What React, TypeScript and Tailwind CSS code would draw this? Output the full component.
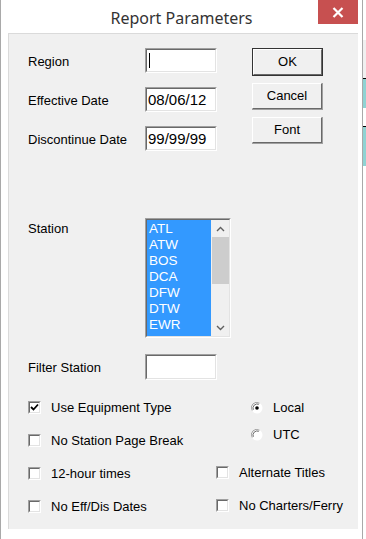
import React from "react";

const font = { fontFamily: '"Liberation Sans", Arial, sans-serif' };

function Sunken({ className = "", children }: { className?: string; children?: React.ReactNode }) {
  return (
    <div className={"border border-t-[#a0a0a0] border-l-[#a0a0a0] border-b-white border-r-white " + className}>
      <div className="w-full h-full border border-t-[#696969] border-l-[#696969] border-b-[#e3e3e3] border-r-[#e3e3e3] bg-white">
        {children}
      </div>
    </div>
  );
}

function TextBox({ value }: { value?: string }) {
  return (
    <Sunken className="w-[72px] h-[25px]">
      <div className="h-full flex items-center pl-[1px] text-[15px] leading-none text-black">
        {value === undefined ? <span className="w-px h-[15px] bg-black ml-[1px]" /> : value}
      </div>
    </Sunken>
  );
}

function Btn({ label, isDefault }: { label: string; isDefault?: boolean }) {
  const inner = (
    <div className="w-full h-full border border-t-white border-l-white border-b-[#696969] border-r-[#696969] bg-[#f0f0f0] flex items-center justify-center text-[13px] text-black">
      {label}
    </div>
  );
  if (isDefault) {
    return <div className="w-[71px] h-[28px] border border-[#333]">{inner}</div>;
  }
  return <div className="w-[71px] h-[27px] border-r border-b border-r-[#a0a0a0] border-b-[#a0a0a0]">{inner}</div>;
}

function CheckBox({ checked }: { checked?: boolean }) {
  return (
    <div className="w-[13px] h-[13px] border border-t-[#a0a0a0] border-l-[#a0a0a0] border-b-white border-r-white shrink-0">
      <div className="w-full h-full border border-t-[#696969] border-l-[#696969] border-b-[#e3e3e3] border-r-[#e3e3e3] bg-white flex items-center justify-center">
        {checked && (
          <svg width="9" height="9" viewBox="0 0 9 9">
            <path d="M1 4 L3.5 6.5 L8 1.5" fill="none" stroke="#000" strokeWidth="1.8" />
          </svg>
        )}
      </div>
    </div>
  );
}

function Radio({ checked }: { checked?: boolean }) {
  return (
    <svg width="12" height="12" viewBox="0 0 12 12" className="shrink-0">
      <circle cx="6" cy="6" r="5.5" fill="#fff" />
      <path d="M1.2 8.5 A5.3 5.3 0 0 1 8.5 1.2" fill="none" stroke="#a0a0a0" strokeWidth="1" />
      <path d="M2.3 7.8 A4.2 4.2 0 0 1 7.8 2.3" fill="none" stroke="#696969" strokeWidth="1" />
      {checked && <circle cx="6" cy="6" r="1.8" fill="#000" />}
    </svg>
  );
}

function CheckRow({ label, checked }: { label: string; checked?: boolean }) {
  return (
    <div className="h-[33px] flex items-center gap-[10px] text-[13px] text-black">
      <CheckBox checked={checked} />
      <span>{label}</span>
    </div>
  );
}

const stations = ["ATL", "ATW", "BOS", "DCA", "DFW", "DTW", "EWR", "LGA"];

export default function App() {
  return (
    <div className="w-[366px] h-[539px] flex bg-white overflow-hidden" style={font}>
      {/* window */}
      <div className="w-[363px] h-full border-l border-r border-[#a9a9a9] bg-white flex flex-col">
        {/* title bar */}
        <div className="h-[33px] flex relative">
          <div className="flex-1 flex justify-center pt-[6px] text-[16px] text-[#333]" style={{ fontFamily: '"Noto Sans", "Open Sans", sans-serif' }}>
            Report Parameters
          </div>
          <div className="absolute right-[4px] top-0 w-[40px] h-[24px] bg-[#c75050] flex items-center justify-center">
            <svg width="12" height="11" viewBox="0 0 12 11">
              <path d="M1.5 1 L10.5 10 M10.5 1 L1.5 10" stroke="#fff" strokeWidth="2.2" />
            </svg>
          </div>
        </div>
        {/* client */}
        <div className="ml-[7px] w-[350px] h-[496px] bg-[#f0f0f0] border-l border-t border-[#dadada] flex flex-col text-[13px] text-black">
          {/* top */}
          <div className="flex pt-[14px]">
            <div className="flex flex-col gap-[14px] pl-[19px]">
              {[
                ["Region", undefined],
                ["Effective Date", "08/06/12"],
                ["Discontinue Date", "99/99/99"],
              ].map(([l, v], i) => (
                <div key={i} className="flex items-center">
                  <span className="w-[117px] pt-[2px]">{l}</span>
                  <TextBox value={v} />
                </div>
              ))}
            </div>
            <div className="flex flex-col gap-[7px] ml-[35px]">
              <Btn label="OK" isDefault />
              <Btn label="Cancel" />
              <Btn label="Font" />
            </div>
          </div>
          {/* station */}
          <div className="flex mt-[67px] pl-[19px]">
            <span className="w-[117px] pt-[1px]">Station</span>
            <Sunken className="w-[86px] h-[120px]">
              <div className="w-full h-full flex bg-[#3399ff]">
                <div className="flex-1 overflow-hidden pl-[2px] text-[13.5px] leading-[16px] text-white pt-[1px]">
                  {stations.map((s) => (
                    <div key={s}>{s}</div>
                  ))}
                </div>
                <div className="w-[18px] h-full bg-[#f0f0f0] flex flex-col items-center">
                  <div className="h-[17px] flex items-center justify-center">
                    <svg width="9" height="6" viewBox="0 0 9 6">
                      <path d="M1 5 L4.5 1.5 L8 5" fill="none" stroke="#606060" strokeWidth="1.4" />
                    </svg>
                  </div>
                  <div className="w-[17px] h-[47px] bg-[#cdcdcd]" />
                  <div className="flex-1" />
                  <div className="h-[17px] flex items-center justify-center">
                    <svg width="9" height="6" viewBox="0 0 9 6">
                      <path d="M1 1 L4.5 4.5 L8 1" fill="none" stroke="#606060" strokeWidth="1.4" />
                    </svg>
                  </div>
                </div>
              </div>
            </Sunken>
          </div>
          {/* filter */}
          <div className="flex items-center mt-[16px] pl-[19px]">
            <span className="w-[117px] pt-[2px]">Filter Station</span>
            <Sunken className="w-[72px] h-[26px]" />
          </div>
          {/* bottom */}
          <div className="flex mt-[11px]">
            <div className="flex flex-col pl-[19px] w-[207px]">
              <CheckRow label="Use Equipment Type" checked />
              <CheckRow label="No Station Page Break" />
              <CheckRow label="12-hour times" />
              <CheckRow label="No Eff/Dis Dates" />
            </div>
            <div className="flex flex-col">
              <div className="flex flex-col pl-[35px] pt-[3px]">
                <div className="h-[27px] flex items-center gap-[10px]">
                  <Radio checked />
                  <span>Local</span>
                </div>
                <div className="h-[27px] flex items-center gap-[10px]">
                  <Radio />
                  <span>UTC</span>
                </div>
              </div>
              <div className="mt-[8px]">
                <CheckRow label="Alternate Titles" />
                <CheckRow label="No Charters/Ferry" />
              </div>
            </div>
          </div>
        </div>
      </div>
      {/* background behind */}
      <div className="flex-1 flex flex-col bg-white">
        <div className="h-[40px]" />
        <div className="h-[38px] bg-[#f0f0f0]" />
        <div className="h-[30px] bg-[#8fd3d3] border-t border-black" />
        <div className="h-[18px]" />
        <div className="h-[40px] bg-[#8fd3d3] border-t border-black" />
      </div>
    </div>
  );
}
